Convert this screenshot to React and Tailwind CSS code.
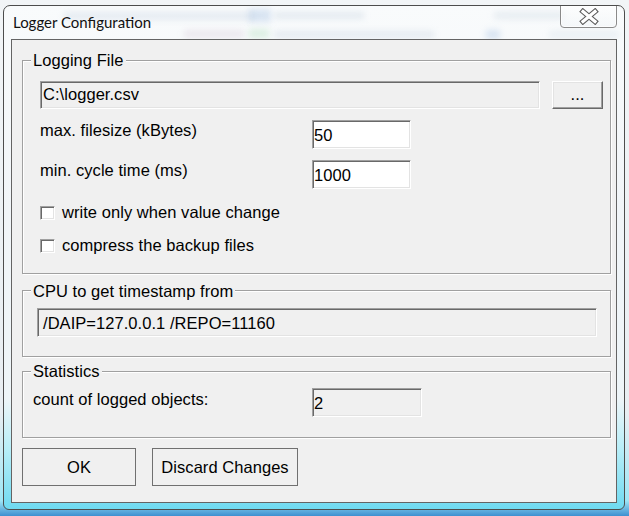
import React from "react";

const sunken =
  "border border-t-[#a0a0a0] border-l-[#a0a0a0] border-b-white border-r-white shadow-[inset_1px_1px_0_#696969,inset_-1px_-1px_0_#e3e3e3]";

function Group({ label, labelTop, className, children }) {
  return (
    <div
      className={
        "relative w-[589px] border border-[#a0a0a0] shadow-[inset_1px_1px_0_#ffffff,1px_1px_0_#ffffff] " +
        className
      }
    >
      <div
        className={
          "absolute left-[8px] px-[2px] bg-[#f0f0f0] leading-[18px] text-black " +
          labelTop
        }
      >
        {label}
      </div>
      {children}
    </div>
  );
}

function Check({ label, className }) {
  return (
    <div className={"flex items-start h-[18px] " + className}>
      <div className={"shrink-0 mt-[3px] w-[15px] h-[14px] bg-white " + sunken} />
      <div className="ml-[7px] leading-[18px]">{label}</div>
    </div>
  );
}

export default function App() {
  return (
    <div className="relative w-[629px] h-[516px] overflow-hidden bg-[linear-gradient(to_bottom,#f2f5f7_0%,#e8eef2_80%,#9fe6f5_97%,#3d8fd0_100%)] font-['Liberation_Sans',Arial,sans-serif] text-[16.5px] tracking-[0.05px] text-black">
      <div className="ml-[3px] mt-[5px] w-[622px] h-[505px] rounded-t-[7px] rounded-b-[6px] border border-[#4d4d4d] bg-[linear-gradient(to_bottom,#f9fbfc_0%,#f1f5f8_40%,#eef5f8_78%,#b8eef8_88%,#6fdaf1_100%)] px-[7px] pb-[6px] flex flex-col relative overflow-hidden">
        {/* blurred background smudges seen through glass */}
        <div className="absolute left-[60px] top-[6px] w-[190px] h-[8px] bg-[#c9d6e4] opacity-40 blur-[3px]" />
        <div className="absolute left-[245px] top-[3px] w-[22px] h-[13px] bg-[#9dbbe0] opacity-35 blur-[3px]" />
        <div className="absolute left-[270px] top-[6px] w-[90px] h-[7px] bg-[#c5d2df] opacity-40 blur-[3px]" />
        <div className="absolute left-[490px] top-[6px] w-[70px] h-[7px] bg-[#c5d2df] opacity-35 blur-[3px]" />
        <div className="absolute left-[180px] top-[24px] w-[60px] h-[8px] bg-[#d6c6d6] opacity-35 blur-[3px]" />
        <div className="absolute left-[245px] top-[23px] w-[20px] h-[9px] bg-[#a8dbb4] opacity-35 blur-[3px]" />
        <div className="absolute left-[270px] top-[25px] w-[160px] h-[7px] bg-[#c8d4e1] opacity-40 blur-[3px]" />
        <div className="absolute left-[482px] top-[24px] w-[14px] h-[9px] bg-[#9dbbe0] opacity-35 blur-[3px]" />
        <div className="absolute left-[545px] top-[25px] w-[70px] h-[7px] bg-[#d0dbe6] opacity-35 blur-[3px]" />

        {/* title bar */}
        <div className="relative h-[33px] flex items-start justify-between shrink-0">
          <div className="pl-[2px] pt-[6px] font-['Lato',sans-serif] tracking-normal text-[15px] leading-[20px] text-[#111]">
            Logger Configuration
          </div>
          <div className="mt-[-1px] w-[57px] h-[23px] rounded-b-[4px] border border-[#8a8a8a] bg-[linear-gradient(to_bottom,rgba(255,255,255,0.6),rgba(240,244,247,0.5))] shadow-[inset_0_0_0_1px_rgba(255,255,255,0.7)] flex items-center justify-center">
            <svg width="20" height="17" viewBox="0 0 20 17">
              <path d="M4 3.5 L16 13.5 M16 3.5 L4 13.5" stroke="#5c5c5c" strokeWidth="5.4" strokeLinecap="square" fill="none" />
              <path d="M4 3.5 L16 13.5 M16 3.5 L4 13.5" stroke="#ffffff" strokeWidth="3.2" strokeLinecap="square" fill="none" />
            </svg>
          </div>
        </div>

        {/* client area */}
        <div className="relative w-[606px] h-[464px] border border-[#646464] bg-[#f0f0f0] pl-[10px] pt-[20px] leading-[18px]">
          <Group label="Logging File" labelTop="top-[-10px]" className="h-[214px] pl-[17px] pt-[20px]">
            <div className="flex items-start">
              <div className={"w-[500px] h-[28px] bg-[#f0f0f0] flex items-center pl-[2px] pb-[2px] " + sunken}>
                C:\logger.csv
              </div>
              <div className="ml-[12px] w-[51px] h-[28px] border border-t-white border-l-white border-b-[#696969] border-r-[#696969] shadow-[inset_-1px_-1px_0_#a0a0a0,inset_1px_1px_0_#e3e3e3] bg-[#f0f0f0] flex items-center justify-center pb-[2px]">
                ...
              </div>
            </div>
            <div className="mt-[11px] flex items-start">
              <div className="w-[272px] mt-[1px]">max. filesize (kBytes)</div>
              <div className={"w-[99px] h-[29px] bg-white flex items-center pl-[1px] " + sunken}>50</div>
            </div>
            <div className="mt-[11px] flex items-start">
              <div className="w-[272px] mt-[1px]">min. cycle time (ms)</div>
              <div className={"w-[99px] h-[29px] bg-white flex items-center pl-[1px] " + sunken}>1000</div>
            </div>
            <Check label="write only when value change" className="mt-[14px]" />
            <Check label="compress the backup files" className="mt-[15px]" />
          </Group>

          <Group label="CPU to get timestamp from" labelTop="top-[-9px]" className="mt-[16px] h-[67px] pl-[14px] pt-[17px]">
            <div className={"w-[560px] h-[29px] bg-[#f0f0f0] flex items-center pl-[5px] " + sunken}>
              /DAIP=127.0.0.1 /REPO=11160
            </div>
          </Group>

          <Group label="Statistics" labelTop="top-[-10px]" className="mt-[14px] h-[67px] pl-[10px] pt-[16px]">
            <div className="flex items-start">
              <div className="w-[279px] mt-[2px]">count of logged objects:</div>
              <div className={"w-[110px] h-[29px] bg-[#f0f0f0] flex items-center pl-[1px] " + sunken}>2</div>
            </div>
          </Group>

          <div className="mt-[10px] flex items-start">
            <div className="w-[114px] h-[38px] border border-[#707070] bg-[#f0f0f0] flex items-center justify-center">
              OK
            </div>
            <div className="ml-[16px] w-[146px] h-[38px] border border-[#707070] bg-[#f0f0f0] flex items-center justify-center">
              Discard Changes
            </div>
          </div>
        </div>
      </div>
    </div>
  );
}
